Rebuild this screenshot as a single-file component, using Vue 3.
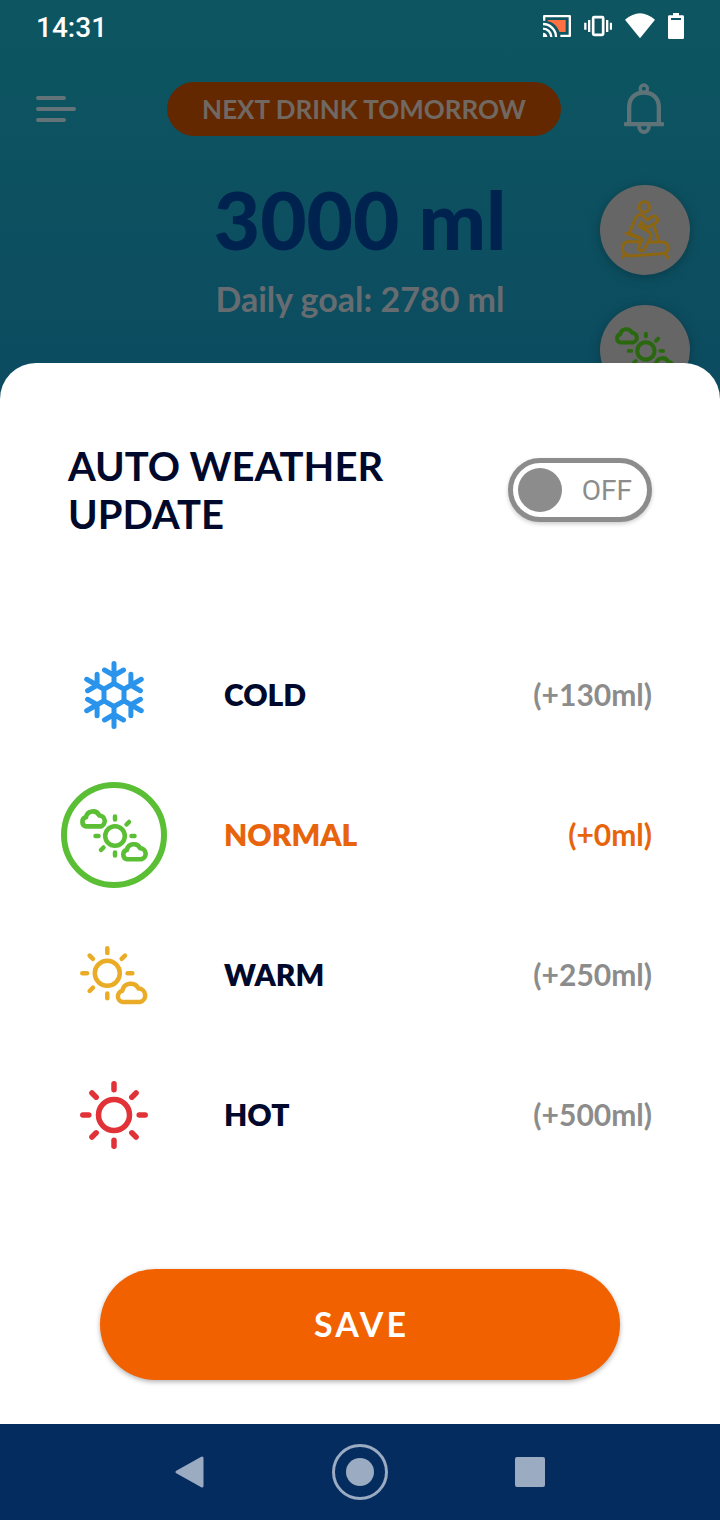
<script setup>
import { ref } from 'vue'

const autoUpdate = ref(false)
const selected = ref('normal')

const options = [
  { id: 'cold', label: 'COLD', amount: '(+130ml)' },
  { id: 'normal', label: 'NORMAL', amount: '(+0ml)' },
  { id: 'warm', label: 'WARM', amount: '(+250ml)' },
  { id: 'hot', label: 'HOT', amount: '(+500ml)' }
]

const cloud = 'M42.5 61 A5.5 5.7 0 0 1 42.3 49.8 A8.6 8.6 0 0 1 58.5 47.6 A6.8 6.8 0 0 1 60 61 Z'
const compass = [0, 45, 90, 135, 180, 225, 270, 315]
</script>

<template>
  <div class="screen">
    <div class="backdrop">
      <div class="status">
        <span class="time">14:31</span>
        <div class="status-icons">
          <svg width="28" height="24" viewBox="66 42 84 72" aria-hidden="true">
            <path d="M69.500 62V48.500H146.500V107.500H118" fill="none" stroke="#fff" stroke-width="7" stroke-linejoin="round" />
            <path d="M80 60H134V96H115C110 80 98 67 80 64Z" fill="#ff7043" />
            <g fill="none" stroke="#fff" stroke-width="7">
              <path d="M66 72A39 39 0 0 1 105 111" />
              <path d="M66 86A25 25 0 0 1 91 111" />
            </g>
            <path d="M66 98A13 13 0 0 1 79 111H66Z" fill="#fff" />
          </svg>
          <svg width="28" height="24" viewBox="189 42 84 72" aria-hidden="true">
            <rect x="216.500" y="51.500" width="30" height="53" rx="3" fill="none" stroke="#fff" stroke-width="8" />
            <path d="M204.500 60V96M193 68V89M258.500 60V96M270 68V89" stroke="#fff" stroke-width="7" />
          </svg>
          <svg width="30" height="26" viewBox="318 39 90 78" aria-hidden="true">
            <path d="M318 59Q363 20 408 59L363 115Z" fill="#fff" />
          </svg>
          <svg width="16" height="26" viewBox="444 39 48 78" aria-hidden="true">
            <path fill-rule="evenodd" d="M459 39H477V46H488Q492 46 492 50V113Q492 117 488 117H448Q444 117 444 113V50Q444 46 448 46H459ZM453 54V60H483V54Z" fill="#fff" />
          </svg>
        </div>
      </div>

      <header class="header">
        <button class="icon-button menu" type="button" aria-label="Menu">
          <svg width="40" height="26" viewBox="0 0 40 26">
            <path d="M2 2H28M2 13H38M2 24H28" stroke="currentColor" stroke-width="4" stroke-linecap="round" />
          </svg>
        </button>
        <div class="next">NEXT DRINK TOMORROW</div>
        <button class="icon-button bell" type="button" aria-label="Notifications">
          <svg width="40" height="52" viewBox="132 40 120 156" fill="none" stroke="currentColor">
            <circle cx="191.500" cy="57" r="11" stroke-width="10" />
            <path d="M147.500 160V112C147.500 84 166 69 191.500 69S236.500 84 236.500 112V160" stroke-width="13" />
            <path d="M137 163.500H247" stroke-width="13" stroke-linecap="round" />
            <path d="M177 168C177 193 207 193 207 168" stroke-width="12" />
          </svg>
        </button>
      </header>

      <section class="hero">
        <div class="summary">
          <h1 class="amount">3000 ml</h1>
          <p class="goal">Daily goal: 2780 ml</p>
        </div>
        <div class="actions">
          <button class="round" type="button" aria-label="Activity">
            <svg width="60" height="60" viewBox="75 75 180 180" fill="none" stroke="#8c6610" stroke-width="9" stroke-linecap="round" stroke-linejoin="round">
              <circle cx="163" cy="96" r="15.500" />
              <path d="M119 172L137 129C141 118 151 117 158 122L173 135L187 124C198 120 207 132 200 142L178 155C172 158 168 156 164 152L153 141L148 154L176 170C184 175 184 183 180 190L163 222C157 231 144 226 146 216L157 192L127 178" />
              <path d="M108 175L148 190" />
              <path d="M191 148L207 200" />
              <path d="M148 200H115C94 201 91 233 110 239L120 243L214 236C239 236 242 203 218 201H178" />
              <path d="M106 238L98 247M226 236L233 248" />
            </svg>
          </button>
          <button class="round" type="button" aria-label="Weather">
            <svg width="60" height="60" viewBox="0 0 68 68" fill="none" stroke="#29680f" stroke-width="4.500" stroke-linecap="round" stroke-linejoin="round">
              <circle cx="35" cy="35" r="9.800" />
              <path d="M35 15.500V18.500M35 51.500V54.500M15.500 35H18.500M51.500 35H54.500M46.500 23.500L49 21M21 49L23.500 46.500" />
              <path :d="cloud" stroke-width="5.600" transform="translate(-28.700 -24.600) scale(.82)" />
              <path :d="cloud" stroke-width="5.600" transform="translate(12.200 8.200) scale(.82)" />
            </svg>
          </button>
        </div>
      </section>
    </div>

    <main class="sheet">
      <div class="auto">
        <h2 id="auto-title" class="title">AUTO WEATHER UPDATE</h2>
        <label class="toggle">
          <input v-model="autoUpdate" type="checkbox" role="switch" aria-labelledby="auto-title">
          <span class="toggle-text">{{ autoUpdate ? 'ON' : 'OFF' }}</span>
        </label>
      </div>

      <div class="options" role="radiogroup" aria-label="Weather">
        <label v-for="o in options" :key="o.id" class="option" :class="[o.id, { active: selected === o.id }]">
          <span class="mark">
            <input v-model="selected" type="radio" name="weather" :value="o.id">
            <svg v-if="o.id === 'cold'" viewBox="0 0 68 68" stroke-width="5">
              <path d="M34 22.500L44 28.200V39.800L34 45.500L24 39.800V28.200Z" />
              <path v-for="n in 6" :key="n" d="M34 2.500V22M24.500 9L34 14.500L43.500 9" :transform="`rotate(${n * 60} 34 34)`" />
            </svg>
            <svg v-else-if="o.id === 'normal'" viewBox="0 0 68 68" stroke-width="4.500">
              <circle cx="35" cy="35" r="9.800" />
              <path d="M35 15.500V18.500M35 51.500V54.500M15.500 35H18.500M51.500 35H54.500M46.500 23.500L49 21M21 49L23.500 46.500" />
              <path :d="cloud" stroke-width="5.600" transform="translate(-28.700 -24.600) scale(.82)" />
              <path :d="cloud" stroke-width="5.600" transform="translate(12.200 8.200) scale(.82)" />
            </svg>
            <svg v-else-if="o.id === 'warm'" viewBox="0 0 68 68" stroke-width="4.500">
              <circle cx="27.300" cy="32.300" r="12.500" />
              <path v-for="a in compass.filter(c => c !== 135)" :key="a" d="M27.300 7.300V12" :transform="`rotate(${a} 27.300 32.300)`" />
              <path :d="cloud" />
            </svg>
            <svg v-else viewBox="0 0 68 68" stroke-width="5.500">
              <circle cx="34" cy="34" r="15.500" />
              <path v-for="a in compass" :key="a" d="M34 2.800V8.800" :transform="`rotate(${a} 34 34)`" />
            </svg>
          </span>
          <span class="name">{{ o.label }}</span>
          <span class="extra">{{ o.amount }}</span>
        </label>
      </div>

      <button class="save" type="button">SAVE</button>
    </main>

    <nav class="nav" aria-label="System">
      <button class="icon-button" type="button" aria-label="Back">
        <svg width="32" height="34" viewBox="0 0 32 34">
          <path d="M3 17L28 3V31Z" fill="currentColor" stroke="currentColor" stroke-width="3" stroke-linejoin="round" />
        </svg>
      </button>
      <button class="icon-button" type="button" aria-label="Home">
        <svg width="56" height="56" viewBox="0 0 56 56">
          <circle cx="28" cy="28" r="26.500" fill="none" stroke="currentColor" stroke-width="3" />
          <circle cx="28" cy="28" r="14" fill="currentColor" />
        </svg>
      </button>
      <button class="icon-button" type="button" aria-label="Recent apps">
        <svg width="30" height="30" viewBox="0 0 30 30">
          <rect width="30" height="30" rx="2" fill="currentColor" />
        </svg>
      </button>
    </nav>
  </div>
</template>

<style>
body {
  margin: 0;
  background: #fff;
}
</style>

<style scoped>
.screen {
  display: flex;
  flex-direction: column;
  min-height: 100vh;
  font-family: Lato, "Liberation Sans", sans-serif;
}

svg {
  display: block;
}

button {
  border: 0;
  padding: 0;
  background: none;
  color: inherit;
  font-family: inherit;
  cursor: pointer;
}

.backdrop {
  background: linear-gradient(#0d5661, #0c4b60);
}

.status {
  display: flex;
  align-items: center;
  justify-content: space-between;
  height: 54px;
  padding: 0 36px;
}

.time {
  padding-top: 2px;
  color: #fff;
  font: 500 28px/32px Roboto, sans-serif;
}

.status-icons {
  display: flex;
  align-items: center;
  gap: 13px;
  padding-bottom: 2px;
}

.header {
  display: grid;
  grid-template-columns: 1fr auto 1fr;
  align-items: center;
  margin-top: 28px;
  padding: 0 28px 0 36px;
}

.icon-button {
  display: grid;
  place-items: center;
}

.menu {
  justify-self: start;
  color: #637377;
}

.bell {
  justify-self: end;
  margin-right: 28px;
  color: #5d7378;
}

.next {
  padding: 0 35px;
  border-radius: 27px;
  background: #632800;
  color: #716862;
  font-size: 26px;
  font-weight: 700;
  line-height: 54px;
  white-space: nowrap;
}

.hero {
  display: grid;
  grid-template-columns: 1fr auto 1fr;
  align-items: start;
  padding: 35px 30px 4px;
}

.summary {
  grid-column: 2;
  text-align: center;
}

.amount {
  margin: 0;
  color: #00224f;
  font-size: 80px;
  font-weight: 900;
  line-height: 96px;
}

.goal {
  margin: 10px 0 0;
  color: #666c70;
  font-size: 34px;
  font-weight: 700;
  line-height: 44px;
}

.actions {
  display: grid;
  gap: 30px;
  justify-self: end;
  margin-top: 14px;
}

.round {
  display: grid;
  place-items: center;
  width: 90px;
  height: 90px;
  border-radius: 50%;
  background: #666;
  box-shadow: 0 2px 12px rgba(0, 0, 0, 0.25);
}

.sheet {
  position: relative;
  display: flex;
  flex: 1;
  flex-direction: column;
  margin-top: -36px;
  padding: 79px 68px 44px;
  border-radius: 36px 36px 0 0;
  background: #fff;
}

.auto {
  display: flex;
  align-items: center;
  justify-content: space-between;
  gap: 80px;
}

.title {
  margin: 0;
  color: #00092b;
  font-size: 40px;
  font-weight: 700;
  line-height: 48px;
}

.toggle {
  display: grid;
  flex: none;
  align-items: center;
  cursor: pointer;
}

.toggle input {
  grid-area: 1 / 1;
  display: flex;
  align-items: center;
  box-sizing: border-box;
  width: 144px;
  height: 64px;
  margin: 0;
  padding: 0 5px;
  border: 5px solid #8c8c8c;
  border-radius: 32px;
  appearance: none;
  background: #fff;
  box-shadow: 0 2px 4px rgba(0, 0, 0, 0.2);
}

.toggle input::before {
  width: 44px;
  height: 44px;
  border-radius: 50%;
  background: #8c8c8c;
  content: "";
}

.toggle input:checked {
  justify-content: flex-end;
}

.toggle-text {
  grid-area: 1 / 1;
  justify-self: end;
  margin-right: 20px;
  padding-top: 2px;
  color: #8c8c8c;
  font: 400 28px/32px Roboto, sans-serif;
}

.toggle input:checked + .toggle-text {
  justify-self: start;
  margin-left: 20px;
}

.options {
  display: grid;
  margin: 87px 0 84px -6px;
}

.option {
  display: grid;
  grid-template-columns: 104px 1fr auto;
  align-items: center;
  column-gap: 58px;
  height: 140px;
  color: #00092b;
  font-size: 30px;
  line-height: 36px;
  cursor: pointer;
}

.mark {
  display: grid;
  place-items: center;
}

.mark input {
  grid-area: 1 / 1;
  box-sizing: border-box;
  width: 106px;
  height: 106px;
  margin: 0 -1px;
  border: 6px solid transparent;
  border-radius: 50%;
  appearance: none;
  color: inherit;
}

.mark input:checked {
  border-color: currentColor;
}

.mark svg {
  grid-area: 1 / 1;
  width: 68px;
  height: 68px;
  fill: none;
  stroke: currentColor;
  stroke-linecap: round;
  stroke-linejoin: round;
  pointer-events: none;
}

.cold .mark {
  color: #2a94ec;
}

.normal .mark {
  color: #5abf34;
}

.warm .mark {
  color: #eaac26;
}

.hot .mark {
  color: #e13238;
}

.name,
.extra {
  padding-bottom: 2px;
  font-weight: 700;
}

.name {
  font-weight: 800;
}

.extra {
  color: #8c8c8c;
}

.active .name,
.active .extra {
  color: #e8640c;
}

.save {
  height: 111px;
  margin: 0 32px;
  padding: 0 0 2px 3px;
  border-radius: 56px;
  background: #f26100;
  box-shadow: 0 2px 5px rgba(0, 0, 0, 0.3);
  color: #fff;
  font-size: 34px;
  font-weight: 700;
  letter-spacing: 3px;
}

.nav {
  display: grid;
  grid-template-columns: repeat(3, 1fr);
  place-items: center;
  height: 96px;
  padding: 0 105px;
  background: #042c5e;
  color: #9aabc2;
}
</style>
